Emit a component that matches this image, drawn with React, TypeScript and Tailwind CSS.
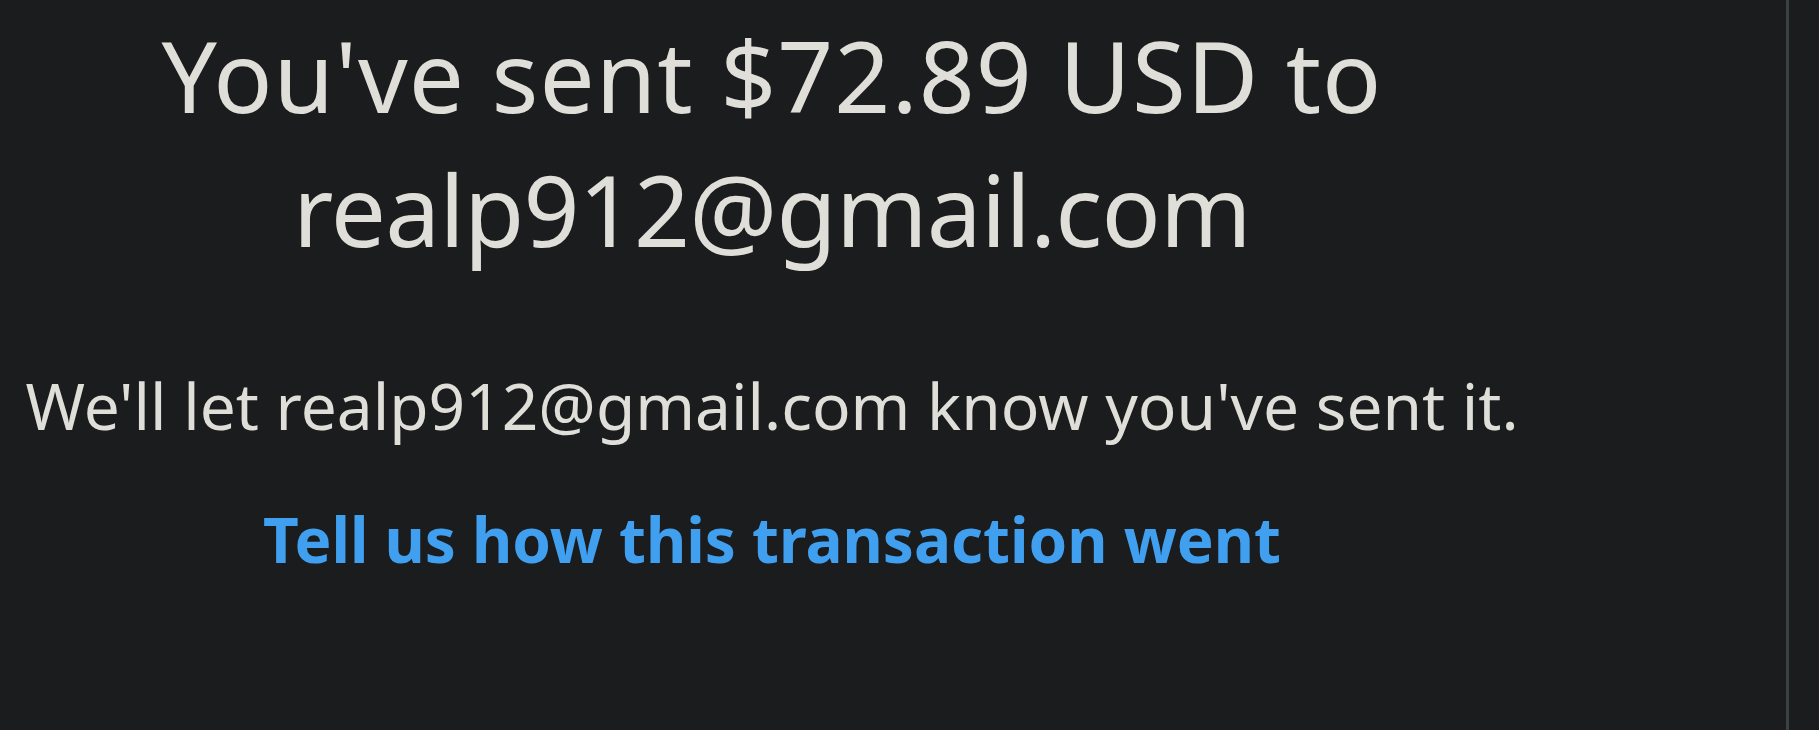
import React from 'react';

const recipient = 'realp912@gmail.com';
const amount = '$72.89 USD';

const App: React.FC = () => {
  return (
    <div className="flex min-h-screen bg-[#1b1c1e] font-['Noto_Sans',sans-serif] text-[#dfded9]">
      <main className="w-[1544px] pt-[8px] text-center">
        <h1 className="text-[98px] leading-[134px] font-normal">
          <span className="tracking-[1px]">You've sent {amount} to</span>
          <br />
          <span className="tracking-[-0.8px]">{recipient}</span>
        </h1>
        <p className="mt-[82px] text-[64px] leading-[96px] whitespace-nowrap">
          We'll let {recipient} know you've sent it.
        </p>
        <a
          href="#"
          className="mt-[39px] block text-[62px] leading-[93px] font-bold text-[#40a0ef] hover:underline"
        >
          Tell us how this transaction went
        </a>
      </main>
      <div className="flex-1" />
      <div className="w-[3px] bg-[#3a4141]" />
      <div className="w-[30px]" />
    </div>
  );
};

export default App;
